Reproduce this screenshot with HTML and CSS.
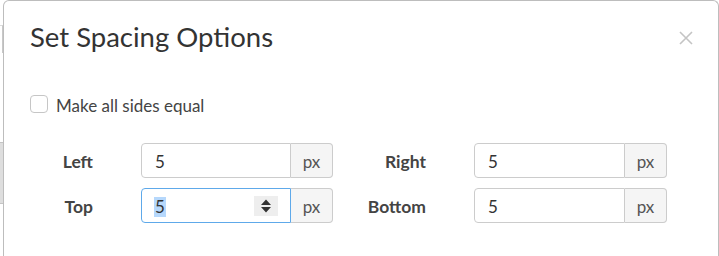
FILE: index.html
```html
<!DOCTYPE html>
<html>
<head>
<meta charset="utf-8">
<link rel="stylesheet" href="styles.css">
</head>
<body>
<div class="page-behind">
  <div class="behind-tab"></div>
  <div class="behind-panel"></div>
</div>
<div class="modal">
  <div class="modal-header">
    <h4 class="modal-title">Set Spacing Options</h4>
    <button class="close" type="button" aria-label="Close">
      <svg width="14" height="14" viewBox="0 0 14 14"><path d="M1 1 L13 13 M13 1 L1 13" stroke="#c4c4c4" stroke-width="1.6" fill="none"/></svg>
    </button>
  </div>
  <div class="modal-body">
    <label class="check"><span class="box"></span><span class="check-text">Make all sides equal</span></label>
    <div class="fields">
      <div class="field">
        <span class="field-label">Left</span>
        <div class="input-group">
          <div class="input"><span>5</span></div>
          <div class="addon">px</div>
        </div>
      </div>
      <div class="field">
        <span class="field-label">Right</span>
        <div class="input-group">
          <div class="input"><span>5</span></div>
          <div class="addon">px</div>
        </div>
      </div>
      <div class="field">
        <span class="field-label">Top</span>
        <div class="input-group">
          <div class="input focused"><span class="sel">5</span>
            <span class="spinner">
              <svg width="12" height="16" viewBox="0 0 12 16"><path d="M6 1.5 L11 7 L1 7 Z M1 9 L11 9 L6 14.5 Z" fill="#333"/></svg>
            </span>
          </div>
          <div class="addon">px</div>
        </div>
      </div>
      <div class="field">
        <span class="field-label">Bottom</span>
        <div class="input-group">
          <div class="input"><span>5</span></div>
          <div class="addon">px</div>
        </div>
      </div>
    </div>
  </div>
</div>
</body>
</html>
```

FILE: styles.css
```css
html, body {
  margin: 0;
  padding: 0;
  background: #ffffff;
  width: 719px;
  height: 256px;
  overflow: hidden;
  font-family: Lato, "Open Sans", sans-serif;
}

.page-behind {
  position: absolute;
  left: 0;
  top: 0;
  width: 4px;
  height: 256px;
}

.behind-tab {
  position: absolute;
  left: 0;
  top: 25px;
  width: 2px;
  height: 27px;
  border-top: 1px solid #dcdcdc;
  border-right: 1px solid #c8c8c8;
}

.behind-panel {
  position: absolute;
  left: 0;
  top: 142px;
  width: 3px;
  height: 60px;
  background: #dedede;
  border-top: 1px solid #c4c4c4;
  border-bottom: 1px solid #c4c4c4;
}

.modal {
  position: absolute;
  left: 3px;
  top: 0;
  width: 714px;
  height: 255px;
  background: #ffffff;
  border: 1px solid #bdbdbd;
  border-bottom: 0;
  border-radius: 6px 6px 0 0;
  box-sizing: content-box;
  overflow: hidden;
}

.modal-header {
  display: flex;
  align-items: center;
  justify-content: space-between;
  padding: 20px 25px 0 26px;
}

.modal-title {
  margin: 0;
  font-size: 27.5px;
  line-height: 32px;
  font-weight: 400;
  color: #333333;
}

.close {
  border: 0;
  background: transparent;
  padding: 0;
  width: 14px;
  height: 14px;
  display: flex;
  margin-top: 1px;
}

.modal-body {
  padding: 41px 26px 0 26px;
}

.check {
  display: flex;
  align-items: flex-start;
  gap: 8px;
  height: 20px;
}

.box {
  width: 16px;
  height: 16px;
  margin-top: 1px;
  border: 1px solid #c6c6c6;
  border-radius: 4px;
  background: #ffffff;
}

.check-text {
  font-size: 17px;
  line-height: 20px;
  margin-top: 1.5px;
  color: #444444;
}

.fields {
  display: grid;
  grid-template-columns: 303px 304px;
  column-gap: 30px;
  row-gap: 10px;
  margin-top: 29px;
}

.field {
  display: flex;
  align-items: center;
  gap: 48px;
}

.field-label {
  width: 63px;
  padding-top: 2px;
  text-align: right;
  font-size: 17.5px;
  font-weight: 700;
  color: #444444;
}

.input-group {
  display: flex;
  flex: 1;
  height: 35px;
}

.input {
  flex: 1;
  display: flex;
  align-items: center;
  justify-content: space-between;
  padding: 2px 12px 0 13px;
  border: 1px solid #cccccc;
  border-radius: 4px 0 0 4px;
  font-size: 17px;
  color: #333333;
  box-sizing: border-box;
}

.input.focused {
  border-color: #5ea9ea;
}

.sel {
  background: #b6d8fc;
  line-height: 20px;
  padding: 0 1px;
  margin-left: -1px;
}

.spinner {
  width: 24px;
  height: 20px;
  margin-top: -2px;
  background: #eeeeee;
  display: flex;
  align-items: center;
  justify-content: center;
}

.addon {
  width: 42px;
  display: flex;
  align-items: center;
  justify-content: center;
  padding-top: 2px;
  border: 1px solid #cccccc;
  border-left: 0;
  border-radius: 0 4px 4px 0;
  background: #f5f5f5;
  font-size: 17px;
  color: #555555;
  box-sizing: border-box;
}
```
